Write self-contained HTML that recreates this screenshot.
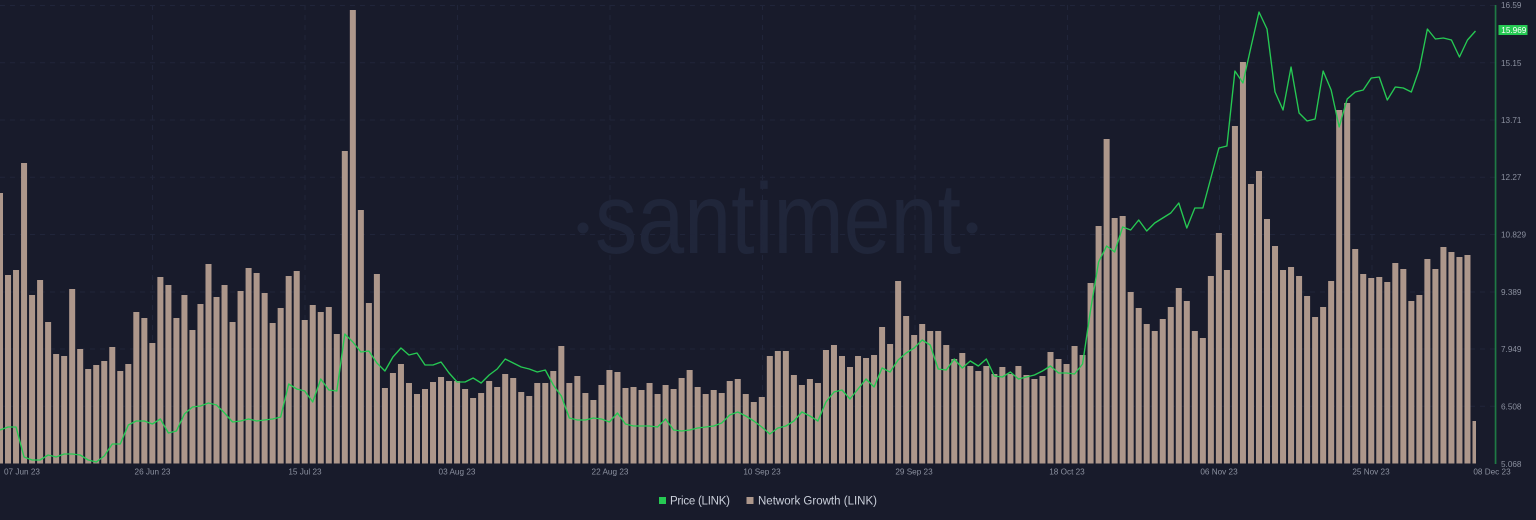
<!DOCTYPE html>
<html><head><meta charset="utf-8"><title>Santiment LINK chart</title>
<style>
html,body{margin:0;padding:0;background:#181b2b;width:1536px;height:520px;overflow:hidden}
svg{display:block}
text{font-family:"Liberation Sans",sans-serif}
.t{font-size:8.2px;fill:#8b909f}
.l{font-size:11.5px;fill:#c9ced9}
</style></head><body>
<svg width="1536" height="520" viewBox="0 0 1536 520" xmlns="http://www.w3.org/2000/svg">
<defs><clipPath id="c"><rect x="0" y="0" width="1476" height="520"/></clipPath></defs>
<rect width="1536" height="520" fill="#181b2b"/>
<g fill="#20263a">
<text x="595" y="253" font-size="100" textLength="366" lengthAdjust="spacingAndGlyphs" style="fill:#20263a">santiment</text>
<circle cx="583" cy="228" r="5.5"/><circle cx="972" cy="228" r="5.5"/>
</g>
<path d="M0 5.5H1495M0 62.7H1495M0 120H1495M0 177.3H1495M0 234.5H1495M0 292H1495M0 349H1495M0 406.3H1495M152.5 5V464M305 5V464M457.5 5V464M610 5V464M762.5 5V464M915 5V464M1067.5 5V464M1219.5 5V464M1372 5V464" stroke="#20253a" stroke-width="1" stroke-dasharray="5 5" fill="none"/>
<g clip-path="url(#c)"><path transform="scale(1.002375,1)" fill="none" stroke="#ad978b" stroke-width="6" d="M0 463.5V193M8 463.5V275M16 463.5V270M24 463.5V163M32 463.5V295M40 463.5V280M48 463.5V322M56 463.5V354M64 463.5V356M72 463.5V289M80 463.5V349M88 463.5V369M96 463.5V365M104 463.5V361M112 463.5V347M120 463.5V371M128 463.5V364M136 463.5V312M144 463.5V318M152 463.5V343M160 463.5V277M168 463.5V285M176 463.5V318M184 463.5V295M192 463.5V330M200 463.5V304M208 463.5V264M216 463.5V297M224 463.5V285M232 463.5V322M240 463.5V291M248 463.5V268M256 463.5V273M264 463.5V293M272 463.5V323M280 463.5V308M288 463.5V276M296 463.5V271M304 463.5V320M312 463.5V305M320 463.5V312M328 463.5V307M336 463.5V334M344 463.5V151M352 463.5V10M360 463.5V210M368 463.5V303M376 463.5V274M384 463.5V388M392 463.5V373M400 463.5V364M408 463.5V383M416 463.5V394M424 463.5V389M432 463.5V382M440 463.5V377M448 463.5V381M456 463.5V381M464 463.5V389M472 463.5V398M480 463.5V393M488 463.5V381M496 463.5V387M504 463.5V374M512 463.5V378M520 463.5V392M528 463.5V396M536 463.5V383M544 463.5V383M552 463.5V371M560 463.5V346M568 463.5V383M576 463.5V376M584 463.5V393M592 463.5V400M600 463.5V385M608 463.5V370M616 463.5V372M624 463.5V388M632 463.5V387M640 463.5V390M648 463.5V383M656 463.5V394M664 463.5V385M672 463.5V389M680 463.5V378M688 463.5V370M696 463.5V387M704 463.5V394M712 463.5V390M720 463.5V393M728 463.5V381M736 463.5V379M744 463.5V394M752 463.5V402M760 463.5V397M768 463.5V356M776 463.5V351M784 463.5V351M792 463.5V375M800 463.5V385M808 463.5V379M816 463.5V383M824 463.5V350M832 463.5V345M840 463.5V356M848 463.5V367M856 463.5V356M864 463.5V358M872 463.5V355M880 463.5V327M888 463.5V344M896 463.5V281M904 463.5V316M912 463.5V335M920 463.5V324M928 463.5V331M936 463.5V331M944 463.5V345M952 463.5V359M960 463.5V353M968 463.5V366M976 463.5V371M984 463.5V366M992 463.5V374M1000 463.5V367M1008 463.5V374M1016 463.5V366M1024 463.5V375M1032 463.5V379M1040 463.5V376M1048 463.5V352M1056 463.5V359M1064 463.5V364M1072 463.5V346M1080 463.5V355M1088 463.5V283M1096 463.5V226M1104 463.5V139M1112 463.5V218M1120 463.5V216M1128 463.5V292M1136 463.5V308M1144 463.5V324M1152 463.5V331M1160 463.5V319M1168 463.5V307M1176 463.5V288M1184 463.5V301M1192 463.5V331M1200 463.5V338M1208 463.5V276M1216 463.5V233M1224 463.5V270M1232 463.5V126M1240 463.5V62M1248 463.5V184M1256 463.5V171M1264 463.5V219M1272 463.5V246M1280 463.5V270M1288 463.5V267M1296 463.5V276M1304 463.5V296M1312 463.5V317M1320 463.5V307M1328 463.5V281M1336 463.5V110M1344 463.5V103M1352 463.5V249M1360 463.5V274M1368 463.5V278M1376 463.5V277M1384 463.5V282M1392 463.5V263M1400 463.5V269M1408 463.5V301M1416 463.5V295M1424 463.5V259M1432 463.5V269M1440 463.5V247M1448 463.5V252M1456 463.5V257M1464 463.5V255M1472 463.5V421"/></g>
<polyline transform="scale(1.002375,1)" fill="none" stroke="#26c953" stroke-width="1.35" stroke-linejoin="round" points="0,430 8,427 16,427 24,457 32,460 40,460 48,455 56,457 64,454 72,454 80,455 88,460 96,462 104,456 112,444 120,444 128,425 136,421 144,421 152,424 160,419 168,433 176,431 184,414 192,407 200,406 208,403 216,405 224,413 232,422 240,421 248,419 256,421 264,420 272,419 280,417 288,384 296,389 304,391 312,402 320,379 328,390 336,391 344,334 352,342 360,352 368,351 376,363 384,371 392,357 400,348 408,355 416,353 424,365 432,365 440,362 448,373 456,382 464,382 472,378 480,383 488,375 496,369 504,359 512,363 520,367 528,369 536,372 544,370 552,385 560,396 568,418 576,420 584,420 592,418 600,419 608,422 616,413 624,424 632,426 640,426 648,426 656,427 664,419 672,430 680,431 688,430 696,428 704,427 712,426 720,423 728,415 736,412 744,416 752,421 760,427 768,434 776,428 784,426 792,421 800,412 808,416 816,421 824,402 832,392 840,390 848,399 856,389 864,379 872,387 880,368 888,372 896,360 904,353 912,348 920,340 928,345 936,369 944,370 952,359 960,368 968,361 976,366 984,359 992,376 1000,377 1008,372 1016,379 1024,377 1032,375 1040,371 1048,366 1056,373 1064,373 1072,374 1080,364 1088,310 1096,262 1104,246 1112,252 1120,227 1128,230 1136,220 1144,231 1152,223 1160,218 1168,213 1176,203 1184,228 1192,208 1200,208 1208,178 1216,148 1224,146 1232,71 1240,83 1248,47 1256,12 1264,29 1272,92 1280,110 1288,67 1296,113 1304,121 1312,119 1320,71 1328,90 1336,127 1344,99 1352,92 1360,90 1368,78 1376,77 1384,100 1392,87 1400,88 1408,92 1416,69 1424,29 1432,39 1440,38 1448,40 1456,57 1464,40 1472,31"/>
<rect x="1494.7" y="5" width="1.7" height="459" fill="#1f7a45"/>
<g class="t">
<text class="t" x="1501" y="8">16.59</text>
<text class="t" x="1501" y="66">15.15</text>
<text class="t" x="1501" y="123">13.71</text>
<text class="t" x="1501" y="180">12.27</text>
<text class="t" x="1501" y="237.5">10.829</text>
<text class="t" x="1501" y="295">9.389</text>
<text class="t" x="1501" y="352">7.949</text>
<text class="t" x="1501" y="409.5">6.508</text>
<text class="t" x="1501" y="467">5.068</text>
<text class="t" x="4" y="474.5">07 Jun 23</text>
<text class="t" x="152.5" y="474.5" text-anchor="middle">26 Jun 23</text>
<text class="t" x="305" y="474.5" text-anchor="middle">15 Jul 23</text>
<text class="t" x="457" y="474.5" text-anchor="middle">03 Aug 23</text>
<text class="t" x="610" y="474.5" text-anchor="middle">22 Aug 23</text>
<text class="t" x="762" y="474.5" text-anchor="middle">10 Sep 23</text>
<text class="t" x="914" y="474.5" text-anchor="middle">29 Sep 23</text>
<text class="t" x="1067" y="474.5" text-anchor="middle">18 Oct 23</text>
<text class="t" x="1219" y="474.5" text-anchor="middle">06 Nov 23</text>
<text class="t" x="1371" y="474.5" text-anchor="middle">25 Nov 23</text>
<text class="t" x="1492" y="474.5" text-anchor="middle">08 Dec 23</text>
</g>
<rect x="1498.5" y="25" width="29" height="10" fill="#26c953"/>
<text x="1501.3" y="33" font-size="8.2" style="fill:#fff">15.969</text>
<rect x="659" y="497" width="7" height="7" fill="#26c953"/>
<text class="l" x="670" y="504.3" textLength="60">Price (LINK)</text>
<rect x="746.5" y="497" width="7" height="7" fill="#ad978b"/>
<text class="l" x="758" y="504.3" textLength="119">Network Growth (LINK)</text>
</svg>
</body></html>
